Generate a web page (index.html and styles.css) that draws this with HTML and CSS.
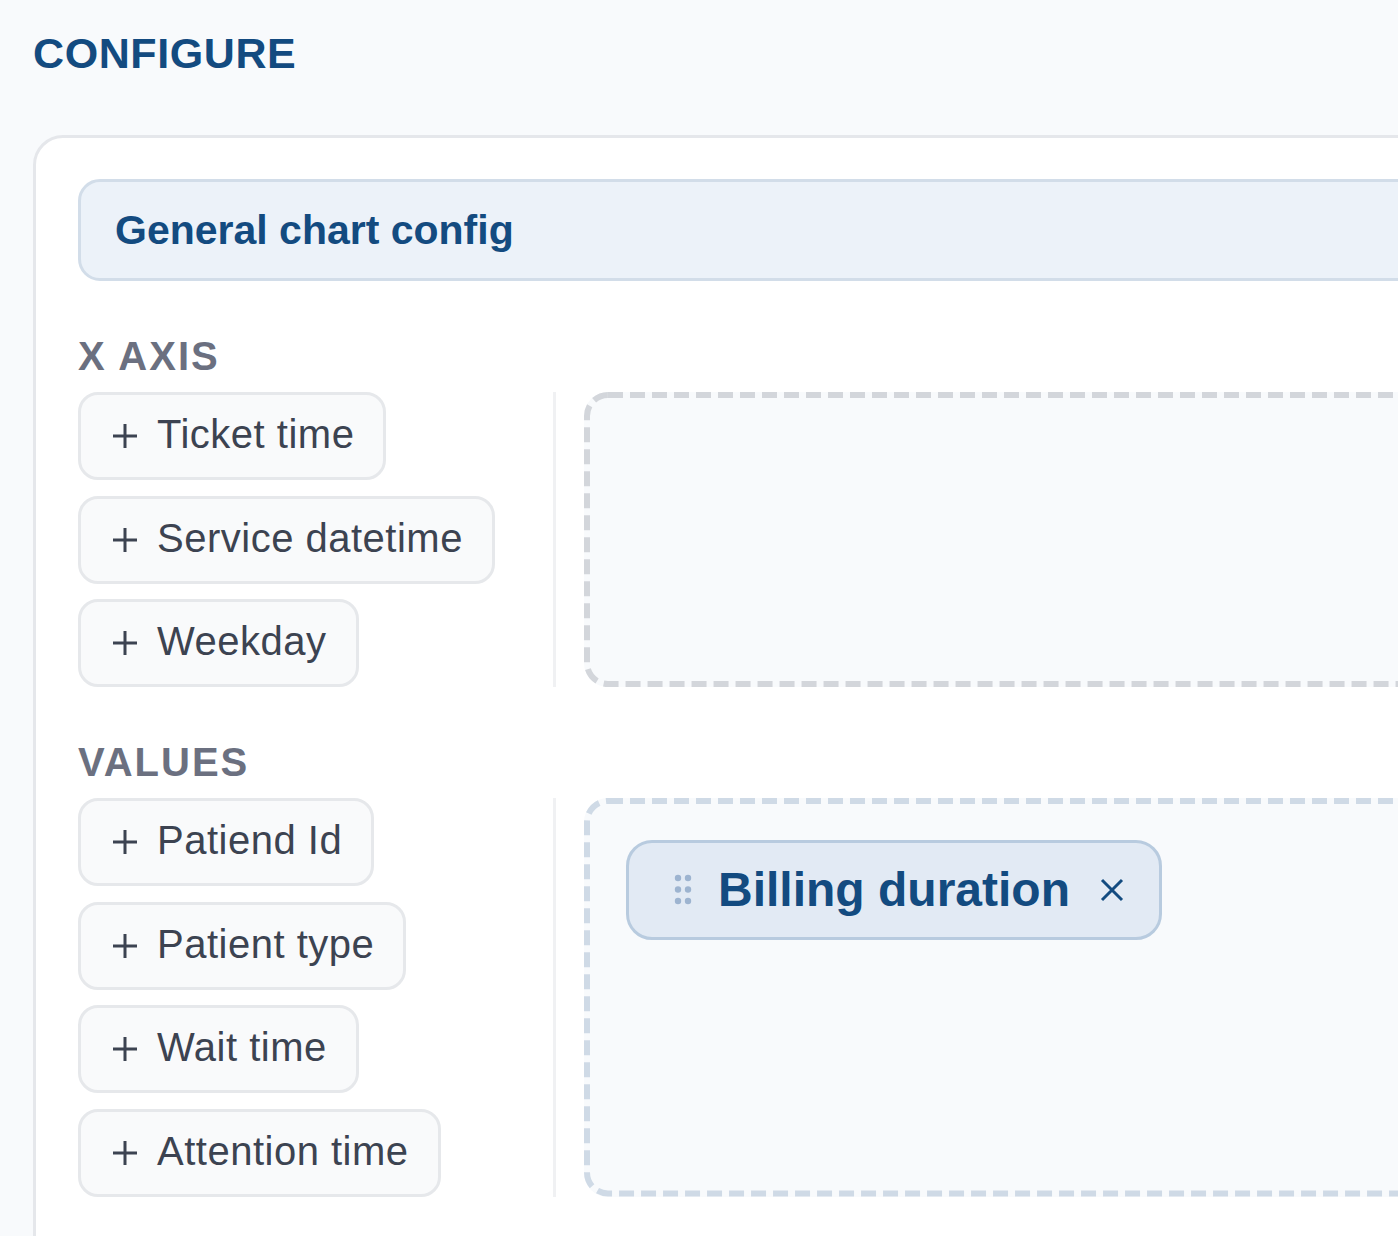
FILE: index.html
```html
<!DOCTYPE html>
<html lang="en">
<head>
<meta charset="utf-8">
<title>Configure</title>
<link rel="stylesheet" href="styles.css">
</head>
<body>
<main class="page">
  <h1 class="title">CONFIGURE</h1>
  <section class="card">
    <div class="card-head">General chart config</div>

    <div class="group">
      <h2 class="group-label">X AXIS</h2>
      <div class="group-body">
        <div class="fields">
          <div class="field"><svg class="plus" viewBox="0 0 26 26"><path d="M13 1v24M1 13h24"/></svg><span>Ticket time</span></div>
          <div class="field"><svg class="plus" viewBox="0 0 26 26"><path d="M13 1v24M1 13h24"/></svg><span>Service datetime</span></div>
          <div class="field"><svg class="plus" viewBox="0 0 26 26"><path d="M13 1v24M1 13h24"/></svg><span>Weekday</span></div>
        </div>
        <div class="divider"></div>
        <div class="dropzone dropzone-gray">
          <svg class="dash"><rect class="dash-rect"/></svg>
        </div>
      </div>
    </div>

    <div class="group">
      <h2 class="group-label">VALUES</h2>
      <div class="group-body">
        <div class="fields">
          <div class="field"><svg class="plus" viewBox="0 0 26 26"><path d="M13 1v24M1 13h24"/></svg><span>Patiend Id</span></div>
          <div class="field"><svg class="plus" viewBox="0 0 26 26"><path d="M13 1v24M1 13h24"/></svg><span>Patient type</span></div>
          <div class="field"><svg class="plus" viewBox="0 0 26 26"><path d="M13 1v24M1 13h24"/></svg><span>Wait time</span></div>
          <div class="field"><svg class="plus" viewBox="0 0 26 26"><path d="M13 1v24M1 13h24"/></svg><span>Attention time</span></div>
        </div>
        <div class="divider"></div>
        <div class="dropzone dropzone-blue">
          <svg class="dash"><rect class="dash-rect"/></svg>
          <div class="picked">
            <svg class="grip" viewBox="0 0 20 34"><circle cx="5" cy="5" r="3.2"/><circle cx="15" cy="5" r="3.2"/><circle cx="5" cy="16.5" r="3.2"/><circle cx="15" cy="16.5" r="3.2"/><circle cx="5" cy="28" r="3.2"/><circle cx="15" cy="28" r="3.2"/></svg>
            <span class="picked-label">Billing duration</span>
            <svg class="close" viewBox="0 0 24 24"><path d="M2 2l20 20M22 2L2 22"/></svg>
          </div>
        </div>
      </div>
    </div>
  </section>
</main>
</body>
</html>
```

FILE: styles.css
```css
* { box-sizing: border-box; }

html, body {
  margin: 0;
  padding: 0;
  background: #f8fafc;
  overflow: hidden;
}

body {
  font-family: "Liberation Sans", Arial, Helvetica, sans-serif;
  width: 1398px;
  height: 1236px;
}

.page {
  padding: 27px 0 0 33px;
}

.title {
  margin: 0;
  font-size: 43px;
  line-height: 52px;
  font-weight: 700;
  letter-spacing: 0.6px;
  color: #134b80;
}

.card {
  margin-top: 56px;
  width: 1560px;
  min-height: 1200px;
  background: #ffffff;
  border: 3px solid #e5e7eb;
  border-radius: 30px;
  padding: 41px 42px 60px 42px;
}

.card-head {
  height: 102px;
  display: flex;
  align-items: center;
  padding-left: 34px;
  background: #ecf2f9;
  border: 3px solid #d2dde9;
  border-radius: 22px;
  font-size: 41px;
  font-weight: 700;
  color: #134b80;
}

.group {
  margin-top: 51px;
}

.group-label {
  margin: 0 0 12px 0;
  font-size: 40px;
  line-height: 48px;
  font-weight: 700;
  letter-spacing: 2px;
  color: #6b7080;
}

.group-body {
  display: flex;
  align-items: stretch;
}

.fields {
  width: 445px;
  flex: none;
  display: flex;
  flex-direction: column;
  align-items: flex-start;
  gap: 15.5px;
}

.field {
  height: 88px;
  display: flex;
  align-items: center;
  gap: 19px;
  padding: 0 29px 3px 31px;
  background: #f9fafb;
  border: 3px solid #e6e8eb;
  border-radius: 20px;
  font-size: 40px;
  letter-spacing: 0.5px;
  color: #3c4351;
  white-space: nowrap;
}

.plus {
  width: 26px;
  height: 26px;
  flex: none;
  margin-top: 3px;
}

.plus path {
  stroke: #3c4351;
  stroke-width: 3;
  fill: none;
}

.divider {
  flex: none;
  width: 3px;
  margin-left: 30px;
  background: #f0f1f3;
}

.dropzone {
  position: relative;
  flex: 1;
  margin-left: 28px;
  border-radius: 24px;
  background: #f8fafc;
  padding: 42px;
}

.dash {
  position: absolute;
  inset: 0;
  width: 100%;
  height: 100%;
  overflow: visible;
}

.dash-rect {
  x: 3px;
  y: 3px;
  width: calc(100% - 6px);
  height: calc(100% - 6px);
  rx: 21px;
  ry: 21px;
  fill: none;
  stroke-width: 6;
  stroke-dasharray: 15 7;
}

.dropzone-gray .dash-rect { stroke: #d3d6db; }
.dropzone-blue .dash-rect { stroke: #cfdae6; }

.picked {
  position: relative;
  display: inline-flex;
  align-items: center;
  height: 100px;
  padding: 0 35px 2px 44px;
  background: #e2eaf4;
  border: 3px solid #b8cbdf;
  border-radius: 26px;
}

.grip {
  width: 20px;
  height: 34px;
  flex: none;
  margin-top: 2px;
}

.grip circle { fill: #9db4d0; }

.picked-label {
  margin-left: 25px;
  font-size: 48px;
  font-weight: 700;
  color: #134b80;
  white-space: nowrap;
}

.close {
  width: 24px;
  height: 24px;
  flex: none;
  margin-left: 30px;
  margin-top: 2px;
}

.close path {
  stroke: #134b80;
  stroke-width: 3;
  fill: none;
}
```
